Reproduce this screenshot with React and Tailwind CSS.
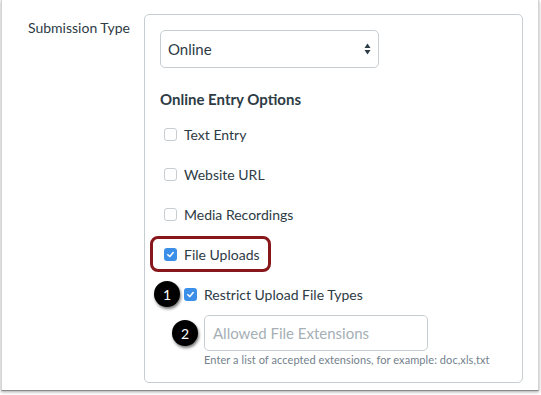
import React from "react";

function Box({ checked }) {
  if (checked) {
    return (
      <span className="flex h-[13px] w-[13px] shrink-0 items-center justify-center rounded-[3px] bg-[#3c8fe8]">
        <svg width="9" height="9" viewBox="0 0 10 10">
          <path d="M2 5.2 L4.2 7.3 L8 2.8" fill="none" stroke="#fff" strokeWidth="1.7" strokeLinecap="round" strokeLinejoin="round" />
        </svg>
      </span>
    );
  }
  return <span className="h-[13px] w-[13px] shrink-0 rounded-[3px] border border-[#c7cdd1] bg-white" />;
}

function Row({ label, checked, indent = "ml-[4px]" }) {
  return (
    <div className={`flex h-[40px] items-center gap-[7px] ${indent}`}>
      <Box checked={checked} />
      <span className="text-[14px] text-[#2d3b45]">{label}</span>
    </div>
  );
}

function Badge({ n, className }) {
  return (
    <div
      className={`absolute flex h-[26px] w-[26px] items-center justify-center rounded-full bg-black text-[14px] text-white shadow-[1px_2px_3px_rgba(0,0,0,0.55)] ${className}`}
    >
      {n}
    </div>
  );
}

export default function App() {
  return (
    <div className="h-[395px] w-[541px] bg-white" style={{ fontFamily: "Lato, 'Open Sans', sans-serif" }}>
      <div className="ml-[1px] flex h-[391px] w-[538px] border-x border-b border-x-[#d4d4d4] border-b-[#8a8a8a] pt-[14px] shadow-[0_1px_3px_rgba(0,0,0,0.35)]">
        <div className="w-[142px] shrink-0 pl-[26px] pt-[3px] text-[14px] text-[#2d3b45]">Submission Type</div>

        <div className="relative h-[369px] w-[379px] rounded-[5px] border border-[#c7cdd1] pl-[15px] pt-[15px]">
          <div className="flex h-[38px] w-[219px] items-center justify-between rounded-[5px] border border-[#c7cdd1] pl-[7px] pr-[7px]">
            <span className="text-[15px] text-[#2d3b45]">Online</span>
            <svg width="7" height="12" viewBox="0 0 7 12">
              <path d="M3.5 0.5 L6.5 5 L0.5 5 Z" fill="#2d3b45" />
              <path d="M3.5 11.5 L6.5 7 L0.5 7 Z" fill="#2d3b45" />
            </svg>
          </div>

          <div className="mt-[21px] text-[15px] font-bold leading-[20px] text-[#2d3b45]">Online Entry Options</div>

          <div className="mt-[5px]">
            <Row label="Text Entry" />
            <Row label="Website URL" />
            <Row label="Media Recordings" />
            <div className="relative">
              <div className="absolute left-[-10px] top-[2px] h-[36px] w-[121px] rounded-[8px] border-[3px] border-[#87171b]" />
              <Row label="File Uploads" checked />
            </div>
            <Row label="Restrict Upload File Types" checked indent="ml-[24px]" />
          </div>

          <div className="ml-[44px] mt-[1px] flex h-[36px] w-[224px] items-center rounded-[5px] border border-[#c7cdd1] pl-[8px] text-[15px] text-[#a5afb5]">
            Allowed File Extensions
          </div>
          <div className="ml-[44px] mt-[2px] text-[11px] leading-[14px] tracking-[0.08px] text-[#73818c]">
            Enter a list of accepted extensions, for example: doc,xls,txt
          </div>

          <Badge n="1" className="left-[9px] top-[266px]" />
          <Badge n="2" className="left-[27px] top-[305px]" />
        </div>
      </div>
    </div>
  );
}
